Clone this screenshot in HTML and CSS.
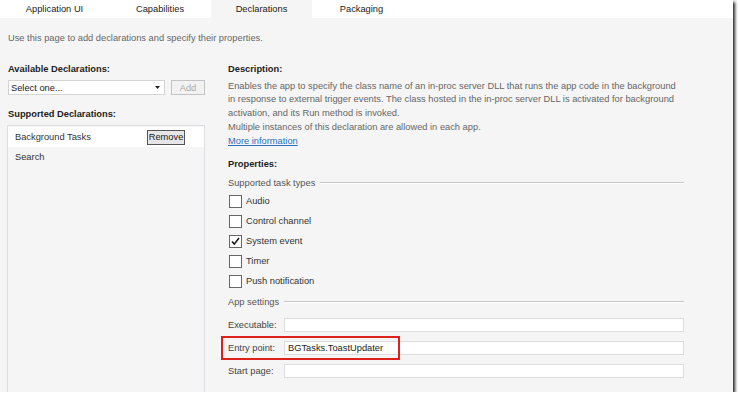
FILE: index.html
```html
<!DOCTYPE html>
<html lang="en">
<head>
  <meta charset="UTF-8">
  <title>Package Manifest - Declarations</title>
  <link rel="stylesheet" href="styles.css">
</head>
<body>
  <div class="frame">
    <!-- Tab strip -->
    <nav class="tabs">
      <span class="tab tab-app">Application UI</span>
      <span class="tab tab-cap">Capabilities</span>
      <span class="tab tab-decl active">Declarations</span>
      <span class="tab tab-pack">Packaging</span>
    </nav>

    <main class="page">
      <p class="intro">Use this page to add declarations and specify their properties.</p>

      <div class="columns">
        <!-- Left column: declaration list -->
        <aside class="side">
          <h2 class="heading">Available Declarations:</h2>
          <div class="add-row">
            <div class="select">
              <span>Select one...</span>
              <svg class="arrow" width="5" height="3" viewBox="0 0 5 3"><path d="M0 0h5L2.5 3z" fill="#222"/></svg>
            </div>
            <button class="btn-add">Add</button>
          </div>
          <h2 class="heading heading-supported">Supported Declarations:</h2>
          <ul class="decl-list">
            <li class="selected"><span class="decl-name">Background Tasks</span><button class="btn-remove">Remove</button></li>
            <li><span class="decl-name">Search</span></li>
          </ul>
        </aside>

        <!-- Right column: details -->
        <section class="detail">
          <h2 class="heading">Description:</h2>
          <p class="desc">Enables the app to specify the class name of an in-proc server DLL that runs the app code in the background in response to external trigger events. The class hosted in the in-proc server DLL is activated for background activation, and its Run method is invoked.</p>
          <p class="desc-line">Multiple instances of this declaration are allowed in each app.</p>
          <a href="#" class="more">More information</a>

          <h2 class="heading heading-props">Properties:</h2>
          <div class="group-title">Supported task types</div>
          <ul class="checks">
            <li><span class="box"></span>Audio</li>
            <li><span class="box"></span>Control channel</li>
            <li><span class="box checked"><svg width="9" height="9" viewBox="0 0 9 9"><path d="M1 4.5l2.3 2.6L8 1" fill="none" stroke="#111" stroke-width="1.5"/></svg></span>System event</li>
            <li><span class="box"></span>Timer</li>
            <li><span class="box"></span>Push notification</li>
          </ul>

          <div class="group-title group-app">App settings</div>
          <div class="fields">
            <div class="field">
              <label>Executable:</label>
              <div class="input"></div>
            </div>
            <div class="field highlighted">
              <label>Entry point:</label>
              <div class="input">BGTasks.ToastUpdater</div>
            </div>
            <div class="field">
              <label>Start page:</label>
              <div class="input"></div>
            </div>
          </div>
        </section>
      </div>
    </main>
  </div>
</body>
</html>
```

FILE: styles.css
```css
body {
  margin: 0;
  background: #fff;
  font-family: 'Liberation Sans', Arial, sans-serif;
  font-size: 9.3px;
  color: #333;
}

.frame {
  width: 733px;
  height: 392px;
  display: flex;
  flex-direction: column;
  overflow: hidden;
  box-shadow: 2px 2px 3px #222;
}

/* Tabs */
.tabs {
  display: flex;
  height: 18px;
  background: #fff;
}

.tab {
  display: flex;
  align-items: center;
  justify-content: center;
  color: #222;
}

.tab-app { width: 109px; }
.tab-cap { width: 102px; }
.tab-decl { width: 101px; }
.tab-pack { width: 99px; }

.tab.active {
  background: #f5f5f5;
}

/* Page */
.page {
  flex: 1;
  display: flex;
  flex-direction: column;
  background: #f5f5f5;
  padding-left: 7px;
}

.intro {
  margin: 13px 0 0 1px;
  line-height: 14px;
  color: #666;
}

.columns {
  flex: 1;
  display: flex;
  margin-top: 17px;
}

.heading {
  margin: 0;
  font-size: 9.3px;
  font-weight: bold;
  line-height: 14px;
  color: #222;
}

/* Left column */
.side {
  width: 198px;
  display: flex;
  flex-direction: column;
}

.side .heading {
  margin-left: 1px;
}

.add-row {
  display: flex;
  margin-top: 4px;
  margin-left: 1px;
}

.select {
  width: 157px;
  height: 15px;
  box-sizing: border-box;
  border: 1px solid #d4d4d4;
  background: #fff;
  display: flex;
  align-items: center;
  justify-content: space-between;
  padding: 0 4px 0 2px;
  color: #222;
}

.btn-add {
  margin-left: 6px;
  width: 34px;
  height: 15px;
  padding: 0;
  border: 1px solid #c4c4c4;
  background: #f2f2f2;
  color: #aaa;
  font: inherit;
}

.heading-supported {
  margin-top: 12px;
}

.decl-list {
  flex: 1;
  list-style: none;
  margin: 4px 0 0 0;
  padding: 1px 0 0 0;
  border: 1px solid #dcdce4;
  border-bottom: none;
}

.decl-list li {
  height: 20px;
  display: flex;
  align-items: center;
  padding-left: 7px;
  color: #333;
}

.decl-list li.selected {
  background: #fff;
}

.decl-name {
  width: 132px;
}

.btn-remove {
  width: 38px;
  height: 15px;
  padding: 0;
  border: 1px solid #555;
  background: #e6e6e6;
  color: #222;
  font: inherit;
}

/* Right column */
.detail {
  width: 456px;
  margin-left: 23px;
  display: flex;
  flex-direction: column;
}

.desc {
  margin: 3.5px 0 0 0;
  line-height: 13.5px;
  color: #666;
}

.desc-line {
  margin: 0;
  line-height: 14px;
  color: #666;
}

.detail .more {
  align-self: flex-start;
  line-height: 14px;
  color: #2a6ebb;
}

.heading-props {
  margin-top: 9px;
}

.group-title {
  margin-top: 5px;
  display: flex;
  align-items: center;
  line-height: 14px;
  color: #555;
}

.group-title::after {
  content: '';
  flex: 1;
  margin-left: 5px;
  border-top: 1px solid #c6c6c6;
  border-bottom: 1px solid #fff;
}

.group-app {
  margin-top: 4px;
}

.checks {
  list-style: none;
  margin: 0;
  padding: 1px 0 0 0;
}

.checks li {
  height: 20px;
  display: flex;
  align-items: center;
  color: #333;
}

.box {
  width: 11px;
  height: 11px;
  margin: 0 4px 0 1px;
  border: 1px solid #666;
  background: #fff;
  display: flex;
  align-items: center;
  justify-content: center;
}

/* App settings fields */
.fields {
  margin-top: 4px;
}

.field {
  position: relative;
  height: 23px;
  display: flex;
  align-items: center;
}

.field label {
  width: 56px;
  color: #444;
}

.field .input {
  width: 400px;
  height: 14px;
  box-sizing: border-box;
  border: 1px solid #dcdcdc;
  background: #fff;
  padding-left: 3px;
  line-height: 12px;
  color: #222;
}

/* Red annotation box */
.highlighted::before {
  content: '';
  position: absolute;
  left: -7px;
  top: 0;
  width: 175px;
  height: 20px;
  border: 2px solid #e0201c;
}
```
